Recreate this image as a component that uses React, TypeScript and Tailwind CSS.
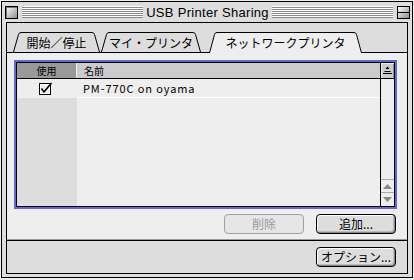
import React from 'react';

const jp = "font-['Noto_Sans_CJK_JP',sans-serif]";

function TabEdge({ side, height, fill }: { side: 'left' | 'right'; height: number; fill: string }) {
  const d =
    side === 'left'
      ? `M0.5 ${height} L5.5 2.5 Q6 0.5 8 0.5`
      : `M0 0.5 Q2 0.5 2.5 2.5 L7.5 ${height}`;
  const fillD =
    side === 'left'
      ? `M0.5 ${height} L5.5 2.5 Q6 0.5 8 0.5 L8 ${height} Z`
      : `M0 0.5 Q2 0.5 2.5 2.5 L7.5 ${height} L0 ${height} Z`;
  return (
    <svg width="8" height={height} className="shrink-0 block">
      <path d={fillD} fill={fill} />
      <path d={d} fill="none" stroke="#000" strokeWidth="1" />
    </svg>
  );
}

function Tab({ label, width, selected }: { label: string; width: number; selected?: boolean }) {
  const h = selected ? 21 : 20;
  const fill = selected ? '#eeeeee' : '#dddddd';
  return (
    <div
      className={`flex items-start ${selected ? 'relative z-10 -mb-[1px]' : ''}`}
      style={{ width }}
    >
      <TabEdge side="left" height={h} fill={fill} />
      <div
        className={`flex-1 border-t border-black flex justify-center pt-[1px] text-[12px] leading-[17px] text-black ${jp} ${
          selected ? 'h-[21px] bg-[#eeeeee]' : 'h-[20px] bg-[#dddddd]'
        }`}
      >
        {label}
      </div>
      <TabEdge side="right" height={h} fill={fill} />
    </div>
  );
}

function MacButton({ label, disabled }: { label: string; disabled?: boolean }) {
  return (
    <div
      className={`w-[80px] h-[20px] rounded-[4px] flex items-center justify-center text-[12px] leading-none ${jp} ${
        disabled
          ? 'border border-[#a0a0a0] text-[#9a9a9a] bg-[#e6e6e6]'
          : 'border border-black text-black bg-[#dddddd] shadow-[inset_-1px_-1px_0_#888888,inset_1px_1px_0_#ffffff,inset_-2px_-2px_0_#bbbbbb]'
      }`}
    >
      {label}
    </div>
  );
}

function Stripes() {
  return (
    <div className="flex-1 h-[12px] bg-[image:repeating-linear-gradient(to_bottom,#ffffff_0px,#ffffff_1px,#8a8a8a_1px,#8a8a8a_2px)]" />
  );
}

export default function App() {
  return (
    <div className="w-[414px] h-[280px] bg-[#eeeeee] pl-[1px] pt-[1px]">
      <div className="w-[412px] h-[277px] border border-black bg-[#dddddd] flex flex-col">
        {/* title bar */}
        <div className="h-[20px] flex items-center pl-[3px] pr-[2px] shrink-0">
          <div className="w-[13px] h-[13px] border border-black bg-[linear-gradient(135deg,#ffffff,#8f8f8f)] shadow-[inset_1px_1px_0_#777777]" />
          <div className="ml-[4px] flex-1 flex items-center">
            <Stripes />
            <div className="px-[3px] text-[13px] leading-none tracking-[0.3px] text-black font-['Liberation_Sans',Arial,sans-serif]">
              USB Printer Sharing
            </div>
            <Stripes />
          </div>
          <div className="ml-[4px] w-[13px] h-[13px] border border-black bg-[linear-gradient(135deg,#ffffff,#8f8f8f)] flex flex-col justify-center">
            <div className="h-[1px] bg-black" />
          </div>
        </div>

        {/* frame */}
        <div className="flex-1 px-[4px] pb-[3px]">
          <div className="h-full border border-black flex flex-col">
            {/* tabs */}
            <div className="h-[29px] shrink-0 pt-[9px] pl-[6px] flex items-start">
              <Tab label="開始／停止" width={87} />
              <div className="w-[1px]" />
              <Tab label="マイ・プリンタ" width={100} />
              <div className="w-[8px]" />
              <Tab label="ネットワークプリンタ" width={153} selected />
            </div>

            {/* panel */}
            <div className="h-[188px] shrink-0 border-t border-black border-b border-b-[#999999] bg-[#eeeeee] pl-[7px] pt-[7px]">
              <div className="w-[383px] h-[149px] border-2 border-[#6666cc]">
                <div className="w-full h-full border border-black flex">
                  {/* main list area */}
                  <div className="w-[363px] flex flex-col">
                    <div className="h-[16px] flex border-b border-black">
                      <div className={`w-[59px] bg-[#999999] flex items-center justify-center text-[10px] leading-none text-black ${jp}`}>
                        使用
                      </div>
                      <div className="w-[1px] bg-[#eeeeee]" />
                      <div className={`flex-1 bg-[#cccccc] flex items-center pl-[7px] text-[10px] leading-none text-black ${jp}`}>
                        名前
                      </div>
                    </div>
                    <div className="h-[19px] flex">
                      <div className="w-[60px] bg-[#eeeeee] flex items-center justify-center pb-[1px]">
                        <svg width="14" height="13" viewBox="0 0 14 13" className="ml-[-3px]">
                          <rect x="0.5" y="1.5" width="11" height="11" fill="#eeeeee" stroke="#000" />
                          <rect x="1.5" y="2.5" width="9" height="9" fill="none" stroke="#ffffff" />
                          <path d="M2.5 6.5 L5 10 L12.5 1" fill="none" stroke="#000" strokeWidth="1.6" />
                        </svg>
                      </div>
                      <div className={`flex-1 bg-[#eeeeee] border-b border-white flex items-center pl-[6px] pt-[1px] text-[11px] leading-none tracking-[0.9px] text-black ${jp}`}>
                        PM-770C on oyama
                      </div>
                    </div>
                    <div className="flex-1 flex">
                      <div className="w-[60px] bg-[#dddddd]" />
                      <div className="flex-1 bg-[#eeeeee]" />
                    </div>
                  </div>
                  {/* scrollbar */}
                  <div className="flex-1 border-l border-black flex flex-col">
                    <div className="h-[16px] bg-[#cccccc] border-b border-black flex items-center justify-center shadow-[inset_1px_1px_0_#eeeeee,inset_-1px_0_0_#888888]">
                      <svg width="9" height="9" viewBox="0 0 9 9">
                        <path d="M4.5 0.5 L6.5 3 L2.5 3 Z" fill="#000" />
                        <rect x="1.5" y="5" width="6" height="1" fill="#000" />
                        <rect x="0" y="7" width="9" height="1" fill="#000" />
                      </svg>
                    </div>
                    <div className="flex-1 bg-[#eeeeee]" />
                    <div className="h-[13px] border-t border-[#aaaaaa] bg-[#eeeeee] flex items-center justify-center">
                      <svg width="9" height="5" viewBox="0 0 9 5">
                        <path d="M4.5 0 L9 5 L0 5 Z" fill="#888888" />
                      </svg>
                    </div>
                    <div className="h-[14px] border-t border-[#aaaaaa] bg-[#eeeeee] flex items-center justify-center">
                      <svg width="9" height="5" viewBox="0 0 9 5">
                        <path d="M0 0 L9 0 L4.5 5 Z" fill="#888888" />
                      </svg>
                    </div>
                  </div>
                </div>
              </div>
              <div className="w-[383px] mt-[5px] pr-[1px] flex justify-end gap-[12px]">
                <MacButton label="削除" disabled />
                <MacButton label="追加..." />
              </div>
            </div>

            {/* bottom bar */}
            <div className="flex-1 border-t border-black flex items-center justify-end pr-[11px]">
              <MacButton label="オプション..." />
            </div>
          </div>
        </div>
      </div>
    </div>
  );
}
